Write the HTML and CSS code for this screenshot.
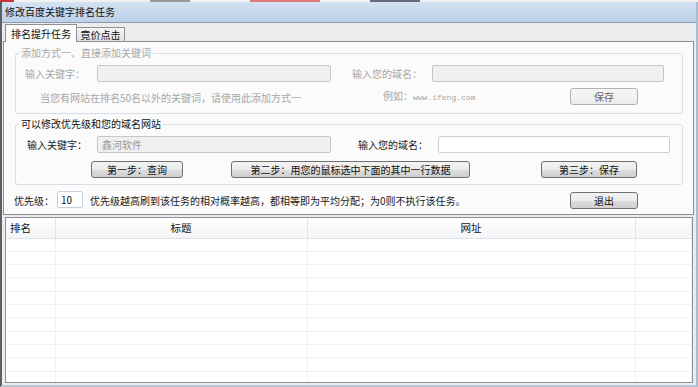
FILE: index.html
```html
<!DOCTYPE html>
<html lang="zh-CN">
<head>
    <meta charset="UTF-8">
    <meta name="viewport" content="width=device-width, initial-scale=1.0">
    <title>修改百度关键字排名任务</title>
    <link rel="stylesheet" href="styles.css">
</head>
<body>
    <div class="strip"></div>
    <div class="window">
        <div class="titlebar">修改百度关键字排名任务</div>

        <div class="tabs">
            <div class="tab active">排名提升任务</div>
            <div class="tab">竟价点击</div>
        </div>

        <div class="panel">
            <fieldset class="group disabled">
                <legend>添加方式一、直接添加关键词</legend>
                <div class="row fields fields-1">
                    <label>输入关键字：</label>
                    <input type="text" class="field" disabled>
                    <label class="label-2">输入您的域名：</label>
                    <input type="text" class="field" disabled>
                </div>
                <div class="row hint-row">
                    <span class="hint">当您有网站在排名50名以外的关键词，请使用此添加方式一</span>
                    <span class="hint">例如：<span class="url">www.ifeng.com</span></span>
                    <button class="btn" disabled>保存</button>
                </div>
            </fieldset>

            <fieldset class="group">
                <legend>可以修改优先级和您的域名网站</legend>
                <div class="row fields fields-2">
                    <label>输入关键字：</label>
                    <input type="text" class="field readonly" value="鑫河软件" readonly>
                    <label class="label-2">输入您的域名：</label>
                    <input type="text" class="field">
                </div>
                <div class="row steps">
                    <button class="btn step-1">第一步：查询</button>
                    <button class="btn step-2">第二步：用您的鼠标选中下面的其中一行数据</button>
                    <button class="btn step-3">第三步：保存</button>
                </div>
            </fieldset>

            <div class="row priority">
                <label>优先级：</label>
                <input type="text" class="field small" value="10">
                <span class="note">优先级越高刷到该任务的相对概率越高，都相等即为平均分配；为0则不执行该任务。</span>
                <button class="btn">退出</button>
            </div>
        </div>

        <div class="listview">
            <table>
                <colgroup>
                    <col class="c-rank">
                    <col class="c-title">
                    <col class="c-url">
                    <col>
                </colgroup>
                <thead>
                    <tr>
                        <th class="left">排名</th>
                        <th>标题</th>
                        <th>网址</th>
                        <th></th>
                    </tr>
                </thead>
                <tbody id="rows"></tbody>
            </table>
        </div>
    </div>

    <script>
        // empty rows of the list view
        const rows = document.getElementById('rows');
        for (let i = 0; i < 11; i++) {
            const tr = document.createElement('tr');
            tr.innerHTML = '<td></td><td></td><td></td><td></td>';
            rows.appendChild(tr);
        }
    </script>
</body>
</html>
```

FILE: styles.css
```css
body {
    margin: 0;
    width: 698px;
    height: 387px;
    overflow: hidden;
    background: #fff;
    font-family: "Noto Sans CJK SC", "Liberation Sans", sans-serif;
    font-size: 10px;
    color: #1a1a1a;
}
.strip {
    height: 2px;
    background: linear-gradient(to right, #c33 0 14px, #f1f1f1 14px 150px, #9a9a9a 150px 190px, #f3f3f3 190px 250px, #e07a7a 250px 320px, #f3f3f3 320px 370px, #6a6a80 370px 420px, #f0f0f0 420px);
}
.window {
    box-sizing: border-box;
    width: 698px;
    height: 385px;
    background: #ececec;
    border-left: 2px solid #5c5f64;
    border-right: 2px solid #a8bfd1;
    border-bottom: 2px solid #b7c7d5;
    overflow: hidden;
}
.titlebar {
    height: 20px;
    line-height: 20px;
    padding-left: 3px;
    background: linear-gradient(#d4e2f2, #bcd0e8);
    border-bottom: 1px solid #8c9cb1;
    color: #111;
}

/* tabs */
.tabs {
    display: flex;
    align-items: flex-end;
    height: 17px;
    padding-left: 3px;
    margin-top: 1px;
}
.tab {
    box-sizing: border-box;
    height: 14px;
    line-height: 13px;
    width: 48px;
    text-align: center;
    border: 1px solid #8e8f8f;
    border-bottom: none;
    border-left: none;
    background: linear-gradient(#f4f4f4, #e1e1e1);
    color: #111;
}
.tab.active {
    position: relative;
    z-index: 1;
    width: 72px;
    height: 18px;
    line-height: 17px;
    margin-bottom: -1px;
    border-left: 1px solid #8e8f8f;
    background: #fbfbfb;
}

/* tab page */
.panel {
    box-sizing: border-box;
    width: 691px;
    margin-left: 1px;
    padding: 4px 0 5px 11px;
    border: 1px solid #8e8f8f;
    background: #fbfbfb;
}
.group {
    box-sizing: border-box;
    width: 668px;
    margin: 0;
    padding: 0 0 8px 0;
    border: 1px solid #d5dfe5;
    border-radius: 3px;
    min-inline-size: 0;
}
.group + .group {
    margin-top: 3px;
    padding-bottom: 6px;
}
.group legend {
    margin-left: 3px;
    padding: 0 2px;
    line-height: 14px;
    color: #111;
}
.group.disabled,
.group.disabled legend {
    color: #a7a7a7;
}
.row {
    display: grid;
    align-items: center;
    white-space: nowrap;
}
.fields {
    height: 17px;
    margin-top: 5px;
}
.fields-1 {
    padding-left: 9px;
    grid-template-columns: 72px 234px 101px 232px;
}
.fields-2 {
    padding-left: 11px;
    grid-template-columns: 70px 234px 107px 232px;
}
.fields-1 .label-2 {
    padding-left: 21px;
}
.fields-2 .label-2 {
    padding-left: 27px;
}
.hint-row {
    height: 18px;
    margin-top: 5px;
    padding-left: 24px;
    grid-template-columns: 343px 187px 68px;
    align-items: end;
}
.hint {
    line-height: 14px;
}
.url {
    font-family: "Liberation Mono", monospace;
    font-size: 8px;
}
.steps {
    height: 17px;
    margin-top: 8px;
    padding-left: 75px;
    grid-template-columns: 92px 48px 239px 71px 96px;
}
.step-2 {
    grid-column: 3;
}
.step-3 {
    grid-column: 5;
}
.priority {
    height: 18px;
    margin-top: 6px;
    margin-left: -1px;
    grid-template-columns: 43px 26px 7px 480px 68px;
}
.priority .field {
    align-self: start;
}
.priority .note {
    grid-column: 4;
}
.priority .btn {
    align-self: end;
}

/* inputs and buttons */
.field {
    box-sizing: border-box;
    height: 17px;
    margin: 0;
    padding: 0 4px;
    border: 1px solid #c9d0d7;
    border-radius: 2px;
    background: #fff;
    font: inherit;
    color: #111;
    outline: none;
}
.field:disabled,
.field.readonly {
    background: #f0f0f0;
    border-color: #c6c6c6;
    color: #9a9a9a;
}
.field.small {
    width: 26px;
    padding: 0 3px;
}
.btn {
    box-sizing: border-box;
    height: 17px;
    margin: 0;
    padding: 0;
    border: 1px solid #707070;
    border-radius: 3px;
    background: linear-gradient(#f3f3f3 0%, #ebebeb 50%, #dddddd 51%, #d0d0d0 100%);
    font: inherit;
    line-height: 15px;
    color: #111;
}
.btn:disabled {
    border-color: #adb2b5;
    background: linear-gradient(#f6f6f6, #ececec);
    color: #6a6a6a;
}

/* list view */
.listview {
    box-sizing: border-box;
    width: 688px;
    height: 166px;
    margin: 2px 0 0 3px;
    border: 1px solid #8a9099;
    background: #fff;
    overflow: hidden;
}
.listview table {
    width: 686px;
    border-collapse: collapse;
    table-layout: fixed;
}
.c-rank { width: 49px; }
.c-title { width: 252px; }
.c-url { width: 328px; }
.listview th {
    box-sizing: border-box;
    height: 20px;
    padding: 0;
    font-size: 10.5px;
    font-weight: normal;
    color: #111;
    text-align: center;
    background: linear-gradient(#ffffff, #f4f5f7);
    border-right: 1px solid #e3e5e8;
    border-bottom: 1px solid #dfe2e6;
}
.listview th.left {
    text-align: left;
    padding-left: 4px;
}
.listview td {
    height: 12.33px;
    padding: 0;
    border-right: 1px solid #f0f1f2;
    border-bottom: 1px solid #eff0f1;
}
```
